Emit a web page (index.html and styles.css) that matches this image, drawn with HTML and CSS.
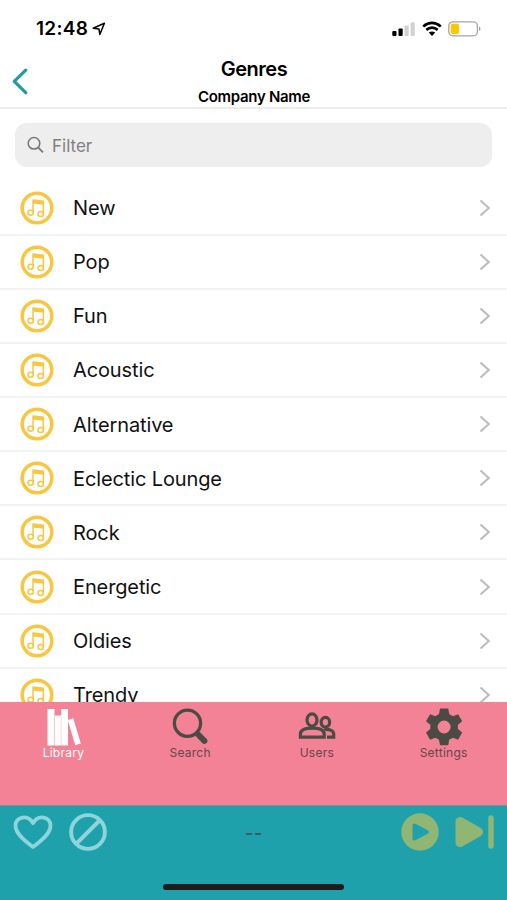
FILE: index.html
```html
<!DOCTYPE html>
<html lang="en">
<head>
<meta charset="utf-8">
<title>Genres</title>
<link rel="stylesheet" href="styles.css">
</head>
<body>
<svg class="sprite" aria-hidden="true">
  <symbol id="note" viewBox="0 0 34 34">
    <circle cx="17" cy="17" r="14.8" fill="none" stroke="#f8c640" stroke-width="3.5"/>
    <g fill="none" stroke="#f8c640" stroke-width="1.5" stroke-linejoin="round">
      <path d="M13 21.5V9l10.400 1.300v12.500M13 11.800l10.400 1.300M13 10.500l10.400 1.300"/>
      <ellipse cx="10.700" cy="21.700" rx="2.700" ry="2.500"/>
      <ellipse cx="20.700" cy="23" rx="2.700" ry="2.500"/>
    </g>
  </symbol>
  <symbol id="chevron" viewBox="0 0 12 18">
    <path d="M1.500 1.500 9.800 9l-8.300 7.500" fill="none" stroke="#bbb" stroke-width="2"/>
  </symbol>
</svg>
<div class="screen">
  <div class="status">
    <span class="time">12:48</span>
    <svg class="location" viewBox="0 0 14 14"><path d="M1.200 6.200 12.400 1.200 7.800 12.500 7 7Z" fill="none" stroke="#000" stroke-width="1.500" stroke-linejoin="round"/></svg>
    <svg class="signal" viewBox="0 0 24 16"><g fill="#000"><rect x=".3" y="10" width="4.2" height="5" rx="1"/><rect x="6.5" y="7.5" width="4.2" height="7.5" rx="1"/></g><g fill="#d2d2d2"><rect x="12.5" y="4.5" width="4.2" height="10.5" rx="1"/><rect x="18.6" y="1.3" width="4.2" height="13.7" rx="1"/></g></svg>
    <svg class="wifi" viewBox="0 0 20 16"><path d="M1.200 5.400Q10-1.500 18.800 5.400M4.300 8.900Q10 4.500 15.700 8.900" fill="none" stroke="#000" stroke-width="2.600"/><path d="M6.700 11.600Q10 9.200 13.300 11.600L10 15Z"/></svg>
    <svg class="battery" viewBox="0 0 34 16"><rect x=".8" y=".8" width="28.6" height="14" rx="4" fill="#fff" stroke="#a5a5a5" stroke-width="1.3"/><rect x="2.7" y="2.7" width="8.3" height="10.2" rx="1.7" fill="#fdc800"/><path d="M31 5.300q3 2.500 0 5Z" fill="#a0a0a0"/></svg>
  </div>
  <header class="header">
    <svg class="back" viewBox="0 0 18 28"><path d="M14.700 2.200 3.300 13.300l11.400 11.400" fill="none" stroke="#1f9da6" stroke-width="3.200" stroke-linecap="round" stroke-linejoin="round"/></svg>
    <div class="titles">
      <h1>Genres</h1>
      <h2>Company Name</h2>
    </div>
  </header>
  <main class="content">
    <div class="filter">
      <svg viewBox="0 0 18 18"><circle cx="7" cy="7.300" r="5.800" fill="none" stroke="#777" stroke-width="1.500"/><path d="m11.300 11.600 4.700 4.700" stroke="#777" stroke-width="1.800"/></svg>
      <span>Filter</span>
    </div>
    <ul class="list">
      <li><svg class="note"><use href="#note"/></svg><span>New</span><svg class="chevron"><use href="#chevron"/></svg></li>
      <li><svg class="note"><use href="#note"/></svg><span>Pop</span><svg class="chevron"><use href="#chevron"/></svg></li>
      <li><svg class="note"><use href="#note"/></svg><span>Fun</span><svg class="chevron"><use href="#chevron"/></svg></li>
      <li><svg class="note"><use href="#note"/></svg><span>Acoustic</span><svg class="chevron"><use href="#chevron"/></svg></li>
      <li><svg class="note"><use href="#note"/></svg><span>Alternative</span><svg class="chevron"><use href="#chevron"/></svg></li>
      <li><svg class="note"><use href="#note"/></svg><span>Eclectic Lounge</span><svg class="chevron"><use href="#chevron"/></svg></li>
      <li><svg class="note"><use href="#note"/></svg><span>Rock</span><svg class="chevron"><use href="#chevron"/></svg></li>
      <li><svg class="note"><use href="#note"/></svg><span>Energetic</span><svg class="chevron"><use href="#chevron"/></svg></li>
      <li><svg class="note"><use href="#note"/></svg><span>Oldies</span><svg class="chevron"><use href="#chevron"/></svg></li>
      <li><svg class="note"><use href="#note"/></svg><span>Trendy</span><svg class="chevron"><use href="#chevron"/></svg></li>
    </ul>
  </main>
  <nav class="tabs">
    <div class="tab active">
      <svg viewBox="0 0 38 38"><g fill="#fff"><rect x="3.5" y="1" width="7" height="36.500"/><rect x="10.900" y="7.500" width="6" height="30"/><rect x="17.200" y="1" width="6.800" height="36.500"/><path d="m23.700 12 5.500-1.800 7.600 25.300-5.500 1.800Z"/></g></svg>
      <span>Library</span>
    </div>
    <div class="tab">
      <svg viewBox="0 0 38 38"><circle cx="16.500" cy="15.200" r="13.100" fill="none" stroke="#4c4b43" stroke-width="3.300"/><path d="m25 24 3 3" stroke="#4c4b43" stroke-width="3"/><path d="m27.700 27 5.700 5.800" stroke="#4c4b43" stroke-width="6" stroke-linecap="round"/></svg>
      <span>Search</span>
    </div>
    <div class="tab">
      <svg viewBox="0 0 38 38"><g fill="none" stroke="#4c4b43" stroke-width="3.200"><ellipse cx="14" cy="12" rx="5" ry="6.100"/><path d="M2.400 29.200v-3c0-4.500 4.900-6 11.800-6s12 1.500 12 6v3Z"/><ellipse cx="27.400" cy="14.300" rx="4.200" ry="4.900"/><path d="M26.300 21.300c5.800-.2 9.400 1.400 9.400 5v2.900H29"/></g></svg>
      <span>Users</span>
    </div>
    <div class="tab">
      <svg viewBox="0 0 38 38"><path fill="#4c4b43" fill-rule="evenodd" d="M15 .6h8.200l1 5.500 3.700 2.100 5.200-2 4.100 7.100-4.300 3.500v4.300l4.300 3.500-4.100 7.100-5.200-2-3.700 2.100-1 5.500H15l-1-5.500-3.700-2.100-5.200 2L1 24.600l4.300-3.500v-4.300L1 13.300l4.100-7.100 5.200 2L14 6.100ZM19.100 12.500a6.500 6.500 0 1 0 0 13 6.500 6.500 0 0 0 0-13Z"/></svg>
      <span>Settings</span>
    </div>
  </nav>
  <footer class="player">
    <div class="controls">
      <svg class="heart" viewBox="0 0 40 36"><path d="M20 33C15 29 2.500 21 2.500 11.500 2.500 2.500 15 .2 20 9.200 25 .2 37.500 2.500 37.500 11.500 37.500 21 25 29 20 33Z" fill="none" stroke="#8ed5db" stroke-width="3.800" stroke-linejoin="round"/></svg>
      <svg class="block" viewBox="0 0 38 38"><g fill="none" stroke="#8ed5db" stroke-width="3.900"><circle cx="19" cy="19" r="16.900"/><path d="M30.500 7.500 7.500 30.500"/></g></svg>
      <span class="track">--</span>
      <svg class="play" viewBox="0 0 38 38"><circle cx="19" cy="19" r="18.700" fill="#90b673"/><path d="M13.500 12.500 25.800 19 13.500 25.500Z" fill="#1ea1ab" stroke="#1ea1ab" stroke-width="4" stroke-linejoin="round"/></svg>
      <svg class="next" viewBox="0 0 39 34"><g fill="#90b673" stroke="#90b673" stroke-linejoin="round" stroke-linecap="round"><path d="M5 6.500v21l18.500-10.500Z" stroke-width="9"/><path d="M36 3v28" stroke-width="5.500"/></g></svg>
    </div>
    <div class="home"></div>
  </footer>
</div>
</body>
</html>
```
FILE: styles.css
```css
* { box-sizing: border-box; }
body { margin: 0; font-family: Inter, "Liberation Sans", sans-serif; background: #fff; color: #111; }
.sprite { position: absolute; width: 0; height: 0; }
svg { display: block; flex: none; }
.screen { width: 507px; height: 900px; display: flex; flex-direction: column; overflow: hidden; }
.status { height: 50px; flex: none; display: flex; align-items: center; padding: 7px 25px 0 36px; }
.time { font-size: 19px; font-weight: 600; line-height: 24px; letter-spacing: .3px; color: #000; width: 53px; white-space: nowrap; }
.location { width: 14px; height: 14px; margin-left: 3px; }
.signal { width: 24px; height: 16px; margin-left: auto; }
.wifi { width: 20px; height: 16px; margin-left: 6px; }
.battery { width: 34px; height: 16px; margin-left: 6px; }
.header { height: 59px; flex: none; display: flex; border-bottom: 2px solid #ededed; }
.back { width: 18px; height: 28px; margin: 18px 0 0 11px; }
.titles { flex: 1; margin-right: 28px; text-align: center; color: #000; }
h1 { margin: 6px 0 0; font-size: 20px; line-height: 27px; font-weight: 600; letter-spacing: -.5px; }
h2 { margin: 4px 0 0; font-size: 15px; line-height: 20px; font-weight: 600; letter-spacing: -.3px; }
.content { height: 593px; flex: none; overflow: hidden; padding-top: 14px; }
.filter { height: 44px; margin: 0 15px; padding-left: 12px; border-radius: 12px; background: #eee; display: flex; align-items: center; gap: 7px; font-size: 17px; color: #808080; }
.filter svg { width: 18px; height: 18px; }
.filter span { padding-top: 1px; }
.list { list-style: none; margin: 14.500px 0 0; padding: 0; }
.list li { height: 54.15px; display: flex; align-items: center; padding: 0 16px 0 20px; border-bottom: 2px solid #f3f3f3; font-size: 20px; letter-spacing: -.12px; }
.list span { flex: 1; margin-left: 19px; padding-top: 1px; }
.note { width: 34px; height: 34px; }
.chevron { width: 12px; height: 18px; }
.tabs { height: 103px; flex: none; background: #f38296; display: grid; grid-template-columns: repeat(4, 1fr); padding-top: 6px; }
.tab { display: flex; flex-direction: column; align-items: center; font-size: 12px; line-height: 15px; letter-spacing: .25px; color: #65464b; }
.tab svg { width: 38px; height: 38px; }
.tab span { margin-top: -1px; }
.active { color: #fff; }
.player { flex: 1; background: #1ea1ab; border-top: 1px solid #6b979f; }
.controls { display: flex; align-items: center; height: 52px; padding: 0 13px 0 13px; }
.heart { width: 40px; height: 36px; }
.block { width: 38px; height: 38px; margin-left: 16px; }
.track { flex: 1; text-align: center; font-size: 18px; font-weight: 600; letter-spacing: .5px; color: #405b5e; }
.play { width: 38px; height: 38px; }
.next { width: 39px; height: 34px; margin-left: 16px; }
.home { width: 181px; height: 6px; border-radius: 3px; background: #1c1c1c; margin: 26px auto 0; }
```
